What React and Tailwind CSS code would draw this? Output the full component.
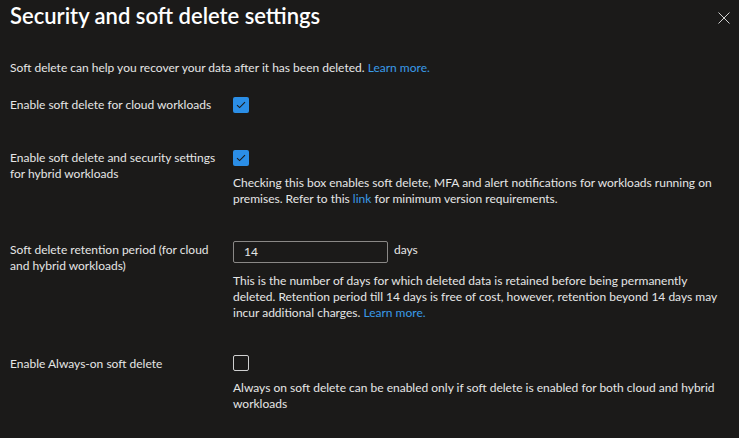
function Check({ checked }) {
  if (!checked) {
    return <span className="block w-4 h-4 rounded-[2px] border border-[#d0d0d0]" />
  }
  return (
    <span className="flex items-center justify-center w-4 h-4 rounded-[2px] bg-[#2b8ee6]">
      <svg width="10" height="8" viewBox="0 0 10 8" fill="none">
        <path d="M1 4.2 L3.6 6.6 L9 1.2" stroke="#1b1a19" strokeWidth="1.1" />
      </svg>
    </span>
  )
}

function Row({ label, children, className }) {
  return (
    <div className={`grid grid-cols-[223px_1fr] ${className}`}>
      <div className="leading-4">{label}</div>
      <div>{children}</div>
    </div>
  )
}

export default function App() {
  return (
    <div
      className="w-[739px] h-[438px] overflow-hidden bg-[#1b1a19] text-[#e6e6e6] text-[12px]"
      style={{ fontFamily: 'Lato, "Liberation Sans", sans-serif' }}
    >
      <div className="flex items-start justify-between pl-[10px] pr-[9px] pt-[2px]">
        <h1 className="text-[22px] leading-7 font-semibold text-white">Security and soft delete settings</h1>
        <svg width="12" height="12" viewBox="0 0 12 12" className="mt-[10px]">
          <path d="M0.5 0.5 L11.5 11.5 M11.5 0.5 L0.5 11.5" stroke="#d0d0d0" strokeWidth="1" />
        </svg>
      </div>

      <div className="px-[10px]">
        <p className="mt-[30px] leading-4">
          Soft delete can help you recover your data after it has been deleted.{' '}
          <a className="text-[#3a9ae8]">Learn more.</a>
        </p>

        <Row label="Enable soft delete for cloud workloads" className="mt-[21px]">
          <Check checked />
        </Row>

        <Row
          label={<>Enable soft delete and security settings<br />for hybrid workloads</>}
          className="mt-[37px]"
        >
          <Check checked />
          <p className="mt-[9px] leading-4">
            Checking this box enables soft delete, MFA and alert notifications for workloads running on<br />
            premises. Refer to this <a className="text-[#3a9ae8]">link</a> for minimum version requirements.
          </p>
        </Row>

        <Row
          label={<div className="pt-[1px]">Soft delete retention period (for cloud<br />and hybrid workloads)</div>}
          className="mt-[34px]"
        >
          <div className="flex items-start gap-[6px]">
            <div className="w-[155px] h-[22px] border border-[#8a8886] rounded-[2px] px-[10px] leading-5">14</div>
            <span className="leading-4 pt-[1px]">days</span>
          </div>
          <p className="mt-[10px] leading-4">
            This is the number of days for which deleted data is retained before being permanently<br />
            deleted. Retention period till 14 days is free of cost, however, retention beyond 14 days may<br />
            incur additional charges. <a className="text-[#3a9ae8]">Learn more.</a>
          </p>
        </Row>

        <Row label={<div className="pt-[1px]">Enable Always-on soft delete</div>} className="mt-[34px]">
          <Check checked={false} />
          <p className="mt-[9px] leading-4">
            Always on soft delete can be enabled only if soft delete is enabled for both cloud and hybrid<br />
            workloads
          </p>
        </Row>
      </div>
    </div>
  )
}
